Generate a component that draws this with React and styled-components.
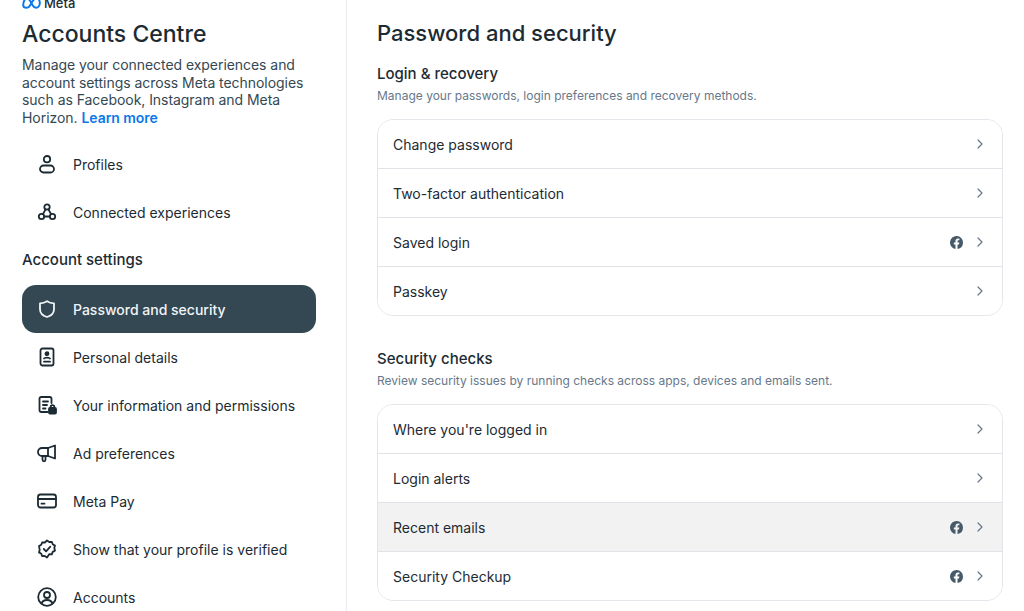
import React from 'react';
import styled, { createGlobalStyle } from 'styled-components';
import { ChevronRight } from 'lucide-react';

const GlobalStyle = createGlobalStyle`
  html, body {
    margin: 0;
    height: 100%;
    overflow: hidden;
    background: #fff;
  }
  body {
    font-family: Inter, "Noto Sans", "Liberation Sans", sans-serif;
    color: #1c2b33;
  }
`

const Page = styled.div`
  display: flex;
  width: 1024px;
  height: 611px;
  overflow: hidden;
`

const Sidebar = styled.aside`
  flex: 0 0 347px;
  box-sizing: border-box;
  border-right: 1px solid #e9ebee;
  padding: 0 30px 0 22px;
`

const Logo = styled.div`
  display: flex;
  align-items: center;
  gap: 3px;
  height: 14px;
  margin-top: -4px;
  font-size: 13px;
  font-weight: 500;
  color: #1c2b33;
`

const SideTitle = styled.h1`
  margin: 9px 0 0;
  font-size: 23px;
  line-height: 30px;
  font-weight: 500;
  letter-spacing: 0;
`

const Intro = styled.p`
  margin: 7px 0 0;
  font-size: 14px;
  line-height: 17.6px;
  color: #344854;
  letter-spacing: -0.05px;
`

const LearnMore = styled.a`
  color: #0a78e8;
  font-weight: 600;
`

const Nav = styled.nav`
  display: flex;
  flex-direction: column;
  margin-top: ${props => props.$top}px;
`

const NavItem = styled.div`
  display: flex;
  align-items: center;
  gap: 16px;
  height: 48px;
  padding-left: 15px;
  border-radius: 14px;
  font-size: 14px;
  background: ${props => (props.$active ? '#344854' : 'transparent')};
  color: ${props => (props.$active ? '#f1f4f7' : '#1c2b33')};
  font-weight: ${props => (props.$active ? 500 : 400)};
`

const NavIcon = styled.svg`
  flex: 0 0 20px;
  width: 20px;
  height: 20px;
  fill: none;
  stroke: currentColor;
  stroke-width: 1.8;
  stroke-linecap: round;
  stroke-linejoin: round;
`

const SideHeading = styled.h2`
  margin: 13px 0 0;
  font-size: 15px;
  line-height: 22px;
  font-weight: 500;
`

const Main = styled.main`
  flex: 1;
  padding: 18px 21px 0 30px;
  min-width: 0;
`

const PageTitle = styled.h1`
  margin: 0;
  font-size: 22px;
  line-height: 30px;
  font-weight: 500;
`

const SectionTitle = styled.h2`
  margin: ${props => props.$top}px 0 0;
  font-size: 15px;
  line-height: 22px;
  font-weight: 500;
`

const SectionHint = styled.p`
  margin: 3px 0 0;
  font-size: 12px;
  line-height: 16px;
  color: #67788a;
`

const Card = styled.div`
  margin-top: 15px;
  border: 1px solid #e3e6ea;
  border-radius: 16px;
  overflow: hidden;
`

const Row = styled.div`
  display: flex;
  align-items: center;
  height: 48px;
  padding: 0 15px;
  font-size: 14px;
  color: #1c2b33;
  background: ${props => (props.$hover ? '#f2f2f2' : '#fff')};
  & + & {
    border-top: 1px solid #dfe2e6;
  }
`

const RowLabel = styled.span`
  flex: 1;
`

const FbBadge = styled.svg`
  width: 13px;
  height: 13px;
  margin-right: 9px;
  fill: #465a69;
`

const Chevron = styled(ChevronRight)`
  width: 16px;
  height: 16px;
  color: #67788a;
  stroke-width: 1.8;
  margin-right: -1px;
`

const MetaMark = () => (
  <svg width="19" height="12" viewBox="0 0 19 12" fill="none" stroke="#0a78e8" strokeWidth="2" strokeLinecap="round">
    <path d="M1.2 8.2C1.2 4.6 3 1.2 5 1.2c2.4 0 4.6 5.2 5.6 7 .9 1.600 2 2.600 3.500 2.600 2 0 3.700-2 3.700-4.800 0-2.700-1.500-4.800-3.500-4.800-2.400 0-4.500 4-6.300 7.200-.9 1.600-1.800 2.400-3.300 2.400-2 0-3.500-.9-3.500-2.600z" />
  </svg>
)

const icons = {
  profile: (
    <>
      <circle cx="10" cy="5.200" r="3.200" />
      <rect x="3" y="11.500" width="14" height="7" rx="3.500" />
    </>
  ),
  connected: (
    <>
      <circle cx="10" cy="5" r="2.700" />
      <circle cx="4.500" cy="14.500" r="2.700" />
      <circle cx="15.500" cy="14.500" r="2.700" />
      <path d="M8.600 7.400 6 12M11.400 7.400 14 12M7.200 14.500h5.600" />
    </>
  ),
  shield: <path d="M10 2.200c2.200 1.500 4.600 2 7 2.100v6c0 3.800-3 6.500-7 7.700-4-1.200-7-3.900-7-7.700v-6c2.400-.1 4.800-.6 7-2.100z" />,
  details: (
    <>
      <rect x="3.500" y="1.500" width="13" height="17" rx="2" />
      <circle cx="10" cy="6.700" r="1.500" fill="currentColor" />
      <path d="M7 11.500c.5-1.300 5.500-1.300 6 0M7 14.700h6" />
    </>
  ),
  info: (
    <>
      <path d="M10.500 17H4.200A1.700 1.700 0 0 1 2.500 15.300V3.700A1.700 1.700 0 0 1 4.200 2h8.600a1.700 1.700 0 0 1 1.700 1.700V8" />
      <path d="M6 6.500h5M6 10h4M6 13.500h2.500" />
      <rect x="12" y="13" width="7" height="5.500" rx="1" fill="currentColor" />
      <path d="M13.700 13v-1a1.800 1.800 0 0 1 3.600 0v1" />
    </>
  ),
  megaphone: (
    <>
      <path d="M18 2.500v13L11 13H5a3.500 3.500 0 0 1 0-8h6z" />
      <path d="M11 5v8M5.500 13v3.800a1.500 1.500 0 0 0 3 0V13" />
    </>
  ),
  card: (
    <>
      <rect x="1" y="3.500" width="18" height="13" rx="2.500" />
      <path d="M1 8h18M4.500 12.700h3" />
    </>
  ),
  verified: (
    <>
      <path d="M10 1.500l2.200 1.500 2.600-.2.900 2.500 2.300 1.300-.7 2.500.7 2.500-2.300 1.300-.9 2.500-2.600-.2L10 18.500l-2.200-1.500-2.600.2-.9-2.500L2 13.400l.7-2.500L2 7.100l2.300-1.300.9-2.500 2.600.2z" />
      <path d="M6.800 10l2.300 2.300 4.200-4.600" />
    </>
  ),
  accounts: (
    <>
      <circle cx="10" cy="10" r="8.800" />
      <circle cx="10" cy="8" r="3" />
      <path d="M4.500 16.500c1-2.700 3-3.500 5.500-3.500s4.500.8 5.500 3.500" />
    </>
  ),
}

const SideLink = ({ icon, label, active }) => (
  <NavItem $active={active}>
    <NavIcon viewBox="0 0 20 20">{icons[icon]}</NavIcon>
    {label}
  </NavItem>
)

const FacebookIcon = () => (
  <FbBadge viewBox="0 0 16 16">
    <path d="M16 8a8 8 0 1 0-9.250 7.900v-5.590H4.720V8h2.030V6.240c0-2 1.190-3.110 3.020-3.110.87 0 1.790.16 1.790.16v1.970h-1.010c-.99 0-1.300.62-1.300 1.250V8h2.220l-.36 2.310H9.250v5.590A8 8 0 0 0 16 8z" />
  </FbBadge>
)

const SettingRow = ({ label, facebook, hover }) => (
  <Row $hover={hover}>
    <RowLabel>{label}</RowLabel>
    {facebook && <FacebookIcon />}
    <Chevron />
  </Row>
)

const App = () => (
  <Page>
    <GlobalStyle />
    <Sidebar>
      <Logo>
        <MetaMark />
        Meta
      </Logo>
      <SideTitle>Accounts Centre</SideTitle>
      <Intro>
        Manage your connected experiences and account settings across Meta technologies such as
        Facebook, Instagram and Meta Horizon. <LearnMore>Learn more</LearnMore>
      </Intro>
      <Nav $top={14}>
        <SideLink icon="profile" label="Profiles" />
        <SideLink icon="connected" label="Connected experiences" />
      </Nav>
      <SideHeading>Account settings</SideHeading>
      <Nav $top={14}>
        <SideLink icon="shield" label="Password and security" active />
        <SideLink icon="details" label="Personal details" />
        <SideLink icon="info" label="Your information and permissions" />
        <SideLink icon="megaphone" label="Ad preferences" />
        <SideLink icon="card" label="Meta Pay" />
        <SideLink icon="verified" label="Show that your profile is verified" />
        <SideLink icon="accounts" label="Accounts" />
      </Nav>
    </Sidebar>
    <Main>
      <PageTitle>Password and security</PageTitle>
      <SectionTitle $top={15}>Login &amp; recovery</SectionTitle>
      <SectionHint>Manage your passwords, login preferences and recovery methods.</SectionHint>
      <Card>
        <SettingRow label="Change password" />
        <SettingRow label="Two-factor authentication" />
        <SettingRow label="Saved login" facebook />
        <SettingRow label="Passkey" />
      </Card>
      <SectionTitle $top={32}>Security checks</SectionTitle>
      <SectionHint>Review security issues by running checks across apps, devices and emails sent.</SectionHint>
      <Card>
        <SettingRow label="Where you're logged in" />
        <SettingRow label="Login alerts" />
        <SettingRow label="Recent emails" facebook hover />
        <SettingRow label="Security Checkup" facebook />
      </Card>
    </Main>
  </Page>
)

export default App;
